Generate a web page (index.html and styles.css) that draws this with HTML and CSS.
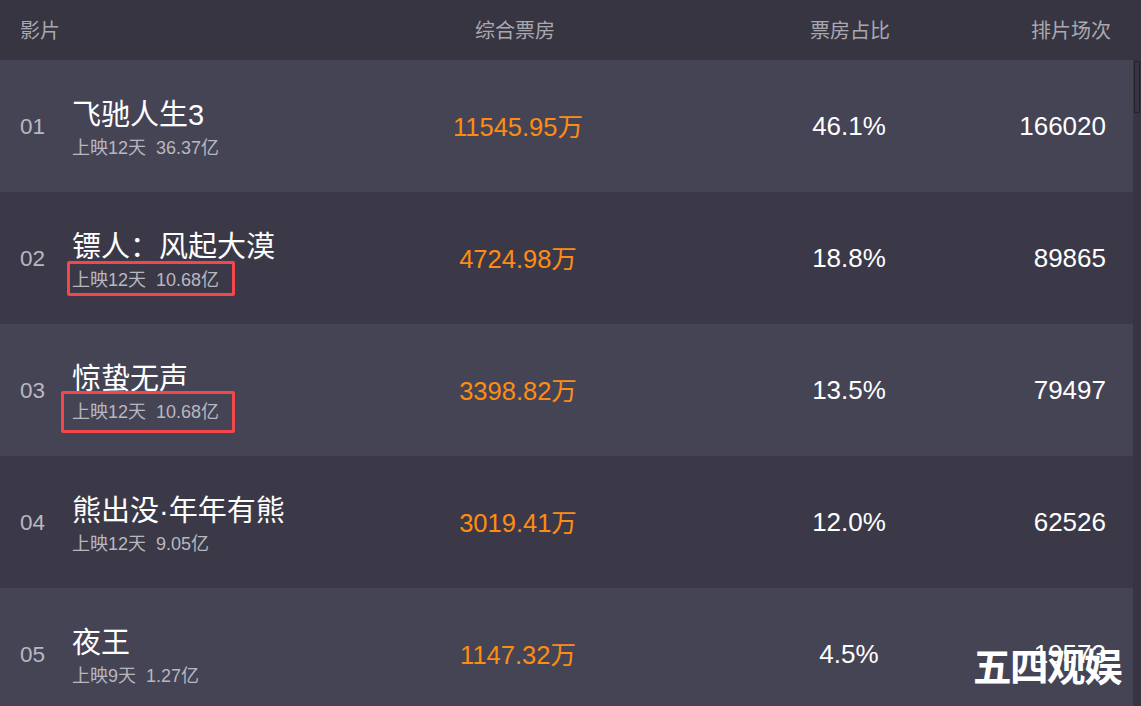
FILE: index.html
```html
<!DOCTYPE html>
<html lang="zh-CN">
<head>
<meta charset="utf-8">
<title>票房榜</title>
<link rel="stylesheet" href="styles.css">
</head>
<body>
<div class="page">
  <div class="head">
    <div class="h-film">影片</div>
    <div class="h-box">综合票房</div>
    <div></div>
    <div class="h-pct">票房占比</div>
    <div class="h-cnt">排片场次</div>
  </div>
  <div class="body">
    <div class="list">
      <div class="row light">
        <div class="rank">01</div>
        <div class="film"><div class="title">飞驰人生3</div><div class="sub">上映12天&nbsp;&nbsp;36.37亿</div></div>
        <div class="box">11545.95万</div>
        <div></div>
        <div class="pct">46.1%</div>
        <div class="cnt">166020</div>
      </div>
      <div class="row dark">
        <div class="rank">02</div>
        <div class="film"><div class="title">镖人：风起大漠</div><div class="sub">上映12天&nbsp;&nbsp;10.68亿<span class="mark mark-a"></span></div></div>
        <div class="box">4724.98万</div>
        <div></div>
        <div class="pct">18.8%</div>
        <div class="cnt">89865</div>
      </div>
      <div class="row light">
        <div class="rank">03</div>
        <div class="film"><div class="title">惊蛰无声</div><div class="sub">上映12天&nbsp;&nbsp;10.68亿<span class="mark mark-b"></span></div></div>
        <div class="box">3398.82万</div>
        <div></div>
        <div class="pct">13.5%</div>
        <div class="cnt">79497</div>
      </div>
      <div class="row dark">
        <div class="rank">04</div>
        <div class="film"><div class="title">熊出没·年年有熊</div><div class="sub">上映12天&nbsp;&nbsp;9.05亿</div></div>
        <div class="box">3019.41万</div>
        <div></div>
        <div class="pct">12.0%</div>
        <div class="cnt">62526</div>
      </div>
      <div class="row light">
        <div class="rank">05</div>
        <div class="film"><div class="title">夜王</div><div class="sub">上映9天&nbsp;&nbsp;1.27亿</div></div>
        <div class="box">1147.32万</div>
        <div></div>
        <div class="pct">4.5%</div>
        <div class="cnt">19573</div>
      </div>
    </div>
    <div class="track"><div class="thumb"></div></div>
  </div>
  <div class="watermark">五四观娱</div>
</div>
</body>
</html>
```

FILE: styles.css
```css
* { box-sizing: border-box; }
html, body { margin: 0; padding: 0; }
body {
  width: 1141px;
  height: 706px;
  overflow: hidden;
  background: #3b3947;
  font-family: "Liberation Sans", "Noto Sans CJK SC", sans-serif;
}
.page { position: relative; width: 1141px; height: 706px; overflow: hidden; }

.head {
  height: 60px;
  background: #373541;
  display: grid;
  grid-template-columns: 52px 316px 254px 79px 258px 132px;
  padding: 0 30px 0 20px;
  align-items: center;
  color: #a9a8b0;
  font-size: 20px;
  padding-bottom: 1px;
}
.h-box, .h-pct { text-align: center; }
.h-film { grid-column: 1 / 3; }
.h-cnt { text-align: right; }

.body { display: flex; }
.list { width: 1133px; }
.track { width: 8px; background: #373541; position: relative; }
.thumb {
  position: absolute;
  left: 1px; top: 1px;
  width: 6px; height: 52px;
  border: 1px dotted #111;
  border-radius: 2px;
}

.row {
  height: 132px;
  display: grid;
  grid-template-columns: 52px 316px 260px 72px 258px 1fr;
  padding: 0 27px 0 20px;
  align-items: center;
}
.light { background: #454455; }
.dark { background: #3b3948; }

.rank { color: #b9b8c0; font-size: 22.5px; padding-top: 1px; }
.film { display: flex; flex-direction: column; padding-top: 4px; }
.title { color: #ffffff; font-size: 29px; line-height: 40px; white-space: nowrap; }
.sub { position: relative; color: #b8b7bf; font-size: 18px; line-height: 26px; white-space: nowrap; }
.box, .pct, .cnt { font-size: 26px; }
.box { color: #ff8c12; font-size: 25.5px; text-align: center; padding-bottom: 4px; }
.pct { color: #ffffff; text-align: center; padding-top: 1px; }
.cnt { color: #ffffff; text-align: right; padding-top: 1px; }

.mark {
  position: absolute;
  border: 3px solid #f2474b;
  border-radius: 2px;
}
.mark-a { left: -5px; top: -6px; width: 168px; height: 35px; }
.mark-b { left: -11px; top: -8px; width: 174px; height: 42px; }

.watermark {
  position: absolute;
  right: 20px;
  bottom: 20px;
  color: #ffffff;
  font-family: "Noto Sans CJK SC", sans-serif;
  font-weight: 700;
  font-size: 38.5px;
  line-height: 44px;
  letter-spacing: -1.5px;
}
```
